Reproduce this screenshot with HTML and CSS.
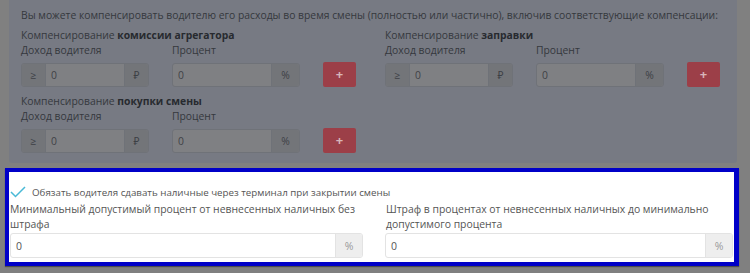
FILE: index.html
```html
<!DOCTYPE html>
<html lang="ru">
<head>
<meta charset="utf-8">
<link rel="stylesheet" href="styles.css">
</head>
<body>
<div class="card">
  <p class="intro">Вы можете компенсировать водителю его расходы во время смены (полностью или частично), включив соответствующие компенсации:</p>
  <div class="groups">
    <div class="group">
      <div class="g-title">Компенсирование <b>комиссии агрегатора</b></div>
      <div class="g-labels"><span class="l-income">Доход водителя</span><span>Процент</span></div>
      <div class="g-row">
        <div class="ig ig-income"><span class="add">≥</span><span class="inp">0</span><span class="add">₽</span></div>
        <div class="ig ig-pct"><span class="inp">0</span><span class="add add-pct">%</span></div>
        <button class="plus">+</button>
      </div>
    </div>
    <div class="group">
      <div class="g-title">Компенсирование <b>заправки</b></div>
      <div class="g-labels"><span class="l-income">Доход водителя</span><span>Процент</span></div>
      <div class="g-row">
        <div class="ig ig-income"><span class="add">≥</span><span class="inp">0</span><span class="add">₽</span></div>
        <div class="ig ig-pct"><span class="inp">0</span><span class="add add-pct">%</span></div>
        <button class="plus">+</button>
      </div>
    </div>
    <div class="group">
      <div class="g-title">Компенсирование <b>покупки смены</b></div>
      <div class="g-labels"><span class="l-income">Доход водителя</span><span>Процент</span></div>
      <div class="g-row">
        <div class="ig ig-income"><span class="add">≥</span><span class="inp">0</span><span class="add">₽</span></div>
        <div class="ig ig-pct"><span class="inp">0</span><span class="add add-pct">%</span></div>
        <button class="plus">+</button>
      </div>
    </div>
  </div>
</div>
<div class="highlight">
  <div class="check-row">
    <svg class="check" width="16" height="12" viewBox="0 0 16 12"><path d="M1 6 L5.5 10.5 L15 1" fill="none" stroke="#49b9d6" stroke-width="1.5"/></svg>
    <span>Обязать водителя сдавать наличные через терминал при закрытии смены</span>
  </div>
  <div class="fields">
    <div class="field f-left">
      <div class="f-label">Минимальный допустимый процент от невнесенных наличных без штрафа</div>
      <div class="w-ig"><span class="w-inp">0</span><span class="w-add">%</span></div>
    </div>
    <div class="field f-right">
      <div class="f-label">Штраф в процентах от невнесенных наличных до минимально допустимого процента</div>
      <div class="w-ig"><span class="w-inp">0</span><span class="w-add">%</span></div>
    </div>
  </div>
</div>
</body>
</html>
```
FILE: styles.css
```css
html, body {
  margin: 0;
  padding: 0;
  background: #808080;
  font-family: "Open Sans", "Noto Sans", sans-serif;
  font-size: 10.5px;
  width: 750px;
  height: 273px;
  overflow: hidden;
}
.card {
  margin-left: 9px;
  width: 728px;
  height: 163px;
  box-sizing: border-box;
  background: #777a83;
  border-radius: 0 0 3px 3px;
  padding: 6px 0 0 12px;
  color: #35383d;
  font-size: 10.35px;
}
.intro {
  margin: 0 0 3px 0;
  line-height: 18px;
  height: 18px;
  white-space: nowrap;
}
.groups {
  display: grid;
  grid-template-columns: 364px 340px;
}
.group {
  height: 66px;
}
.g-title {
  line-height: 16px;
}
.g-title b {
  font-weight: 700;
  color: #272a2f;
}
.g-labels {
  display: flex;
  line-height: 15px;
}
.l-income {
  width: 151px;
}
.g-row {
  display: flex;
  align-items: center;
  margin-top: 4px;
}
.ig {
  display: flex;
  height: 24px;
  border: 1px solid #6f7278;
  border-radius: 3px;
  box-sizing: border-box;
  background: #7f8083;
  overflow: hidden;
}
.ig-income { width: 128px; }
.ig-pct { width: 128px; margin-left: 23px; }
.add {
  background: #737579;
  color: #3d4045;
  width: 23px;
  display: flex;
  align-items: center;
  justify-content: center;
}
.add-pct { width: 27px; }
.inp {
  flex: 1;
  display: flex;
  align-items: center;
  padding-left: 5px;
  color: #3f4146;
  border-left: 1px solid #6f7278;
  border-right: 1px solid #6f7278;
}
.ig-pct .inp { border-left: 0; }
.plus {
  margin-left: 23px;
  width: 33px;
  height: 25px;
  border: 0;
  border-radius: 2px;
  background: #9c3f48;
  color: #d8b5b9;
  font-family: inherit;
  font-size: 13px;
  font-weight: 700;
  padding: 0;
  line-height: 25px;
}
.highlight {
  margin: 5px 0 0 5px;
  width: 734px;
  height: 98px;
  box-sizing: border-box;
  border: 4px solid #0000c8;
  border-right-width: 5px;
  background: #fff;
  color: #555;
  box-shadow: 0 1px 1px rgba(0,0,0,0.4);
  padding-top: 11px;
}
.check-row {
  display: flex;
  align-items: center;
  height: 18px;
  padding-left: 1px;
  font-size: 9.75px;
}
.check {
  margin-right: 6px;
}
.fields {
  display: grid;
  grid-template-columns: 353px 348px;
  column-gap: 22px;
  padding-left: 1px;
}
.f-label {
  line-height: 14.5px;
  height: 30px;
  padding-top: 1px;
  font-size: 10.4px;
}
.f-right .f-label {
  padding-left: 1px;
}
.w-ig {
  display: flex;
  height: 25px;
  margin-top: 1px;
  border: 1px solid #e3e3e3;
  border-radius: 3px;
  box-sizing: border-box;
  overflow: hidden;
}
.w-inp {
  flex: 1;
  display: flex;
  align-items: center;
  padding-left: 5px;
  color: #555;
}
.w-add {
  width: 26px;
  display: flex;
  align-items: center;
  justify-content: center;
  background: #eee;
  border-left: 1px solid #e3e3e3;
  color: #999;
}
```
